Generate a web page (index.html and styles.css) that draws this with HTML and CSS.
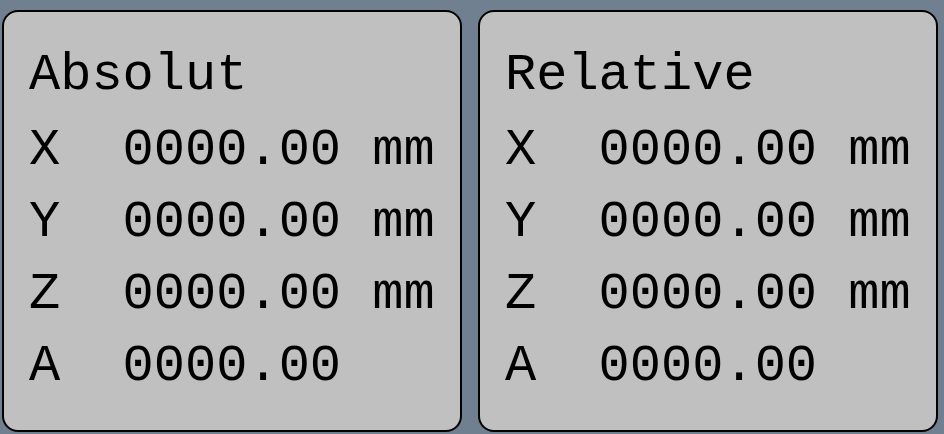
FILE: index.html
```html
<!DOCTYPE html>
<html lang="en">
<head>
    <meta charset="UTF-8">
    <title>Position</title>
    <link rel="stylesheet" href="styles.css">
</head>
<body>
    <div class="panels">
        <div class="panel">
            <div class="title">Absolut</div>
            <div class="row"><span class="axis">X</span><span class="value">0000.00</span><span class="unit">mm</span></div>
            <div class="row"><span class="axis">Y</span><span class="value">0000.00</span><span class="unit">mm</span></div>
            <div class="row"><span class="axis">Z</span><span class="value">0000.00</span><span class="unit">mm</span></div>
            <div class="row"><span class="axis">A</span><span class="value">0000.00</span><span class="unit"></span></div>
        </div>
        <div class="panel">
            <div class="title">Relative</div>
            <div class="row"><span class="axis">X</span><span class="value">0000.00</span><span class="unit">mm</span></div>
            <div class="row"><span class="axis">Y</span><span class="value">0000.00</span><span class="unit">mm</span></div>
            <div class="row"><span class="axis">Z</span><span class="value">0000.00</span><span class="unit">mm</span></div>
            <div class="row"><span class="axis">A</span><span class="value">0000.00</span><span class="unit"></span></div>
        </div>
    </div>
</body>
</html>
```

FILE: styles.css
```css
body {
    margin: 0;
    padding: 10px 0 0 2px;
    background-color: #708090;
    font-family: "Courier New", "Liberation Mono", monospace;
    font-size: 52px;
    color: #000;
}
.panels {
    display: flex;
    gap: 16px;
}
.panel {
    box-sizing: border-box;
    width: 460px;
    height: 422px;
    padding: 28px 0 0 25px;
    background-color: #c0c0c0;
    border: 2px solid #000;
    border-radius: 16px;
}
.title {
    line-height: 72px;
    margin-bottom: 3px;
}
.row {
    display: flex;
    line-height: 72px;
    white-space: pre;
}
.axis {
    width: 3ch;
}
.value {
    width: 8ch;
}
```
